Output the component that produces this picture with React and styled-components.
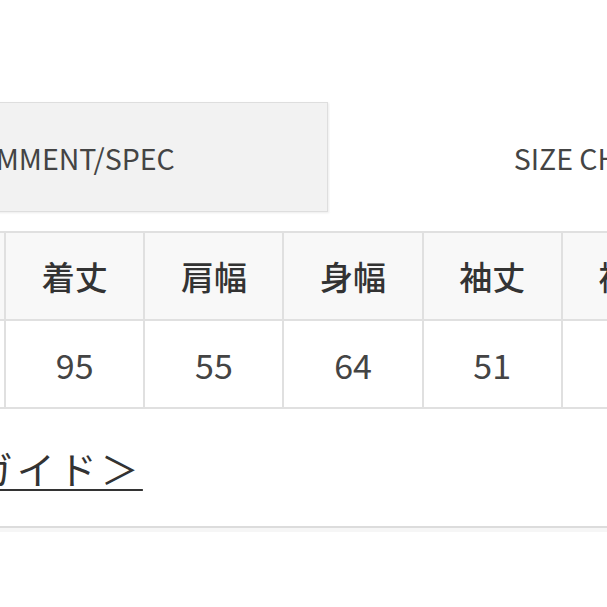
import React from "react";
import styled, {createGlobalStyle} from "styled-components";

const columns = [
  {label: "サイズ", value: "F"},
  {label: "着丈", value: "95"},
  {label: "肩幅", value: "55"},
  {label: "身幅", value: "64"},
  {label: "袖丈", value: "51"},
  {label: "裄丈", value: "78"},
];

const App = () => {
  return (
    <>
      <GlobalStyle />
      <Page>
        <TabBar>
          <Tab active>COMMENT/SPEC</Tab>
          <Tab>SIZE CHART</Tab>
        </TabBar>
        <SizeTable>
          <thead>
            <tr>
              {columns.map((c) => (
                <Th key={c.label}>{c.label}</Th>
              ))}
            </tr>
          </thead>
          <tbody>
            <tr>
              {columns.map((c) => (
                <Td key={c.label}>{c.value}</Td>
              ))}
            </tr>
          </tbody>
        </SizeTable>
        <GuideRow>
          <GuideLink href="#">サイズガイド＞</GuideLink>
        </GuideRow>
        <Divider />
        <NextSection />
      </Page>
    </>
  );
};

const GlobalStyle = createGlobalStyle`
  html, body {
    margin: 0;
    padding: 0;
    background: #ffffff;
    overflow: hidden;
  }
  body {
    width: 607px;
    height: 607px;
    font-family: "Noto Sans CJK JP", "Noto Sans", sans-serif;
    color: #333;
  }
`;

const Page = styled.div`
  width: 1100px;
  margin-left: -135px;
  padding-top: 102px;
`;

const TabBar = styled.div`
  display: flex;
  margin-left: -61px;
  gap: 2px;
`;

const Tab = styled.div`
  width: 524px;
  height: 110px;
  box-sizing: border-box;
  display: flex;
  align-items: center;
  justify-content: center;
  font-size: 28.5px;
  color: #444;
  background: ${(p) => (p.active ? "#f2f2f2" : "#ffffff")};
  border: 1px solid ${(p) => (p.active ? "#dedede" : "transparent")};
  box-shadow: ${(p) => (p.active ? "1px 1px 2px rgba(0,0,0,0.08)" : "none")};
`;

const SizeTable = styled.table`
  margin-top: 19px;
  border-collapse: collapse;
  table-layout: fixed;
  width: ${139.5 * 6}px;
`;

const Th = styled.th`
  height: 86px;
  padding: 0;
  background: #f8f8f8;
  border: 2px solid #e0e0e0;
  font-size: 33px;
  font-weight: 500;
  color: #333;
  text-align: center;
`;

const Td = styled.td`
  height: 86px;
  padding: 0;
  background: #ffffff;
  border: 2px solid #e0e0e0;
  font-size: 34px;
  color: #444;
  text-align: center;
`;

const GuideRow = styled.div`
  height: 117px;
  display: flex;
  align-items: center;
`;

const GuideLink = styled.a`
  margin-left: -15px;
  font-size: 38px;
  letter-spacing: 4px;
  color: #333;
  text-decoration: underline;
  text-decoration-thickness: 2px;
  text-underline-offset: 5px;
`;

const Divider = styled.div`
  height: 2px;
  background: #dcdcdc;
`;

const NextSection = styled.div`
  height: 76px;
  border-top: 4px solid #f6f6f6;
  border-bottom: 1px solid #ececec;
`;

export default App;
